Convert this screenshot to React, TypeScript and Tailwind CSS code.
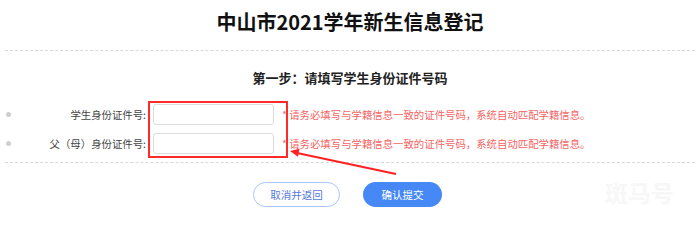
const fields = [
  { label: "学生身份证件号:" },
  { label: "父（母）身份证件号:" },
]

export default function App() {
  return (
    <div className="relative w-[700px] h-[221px] overflow-hidden bg-white font-['Noto_Sans_CJK_SC',sans-serif]">
      {/* Header */}
      <h1 className="pt-[8px] text-center text-[20px] leading-[28px] font-bold text-[#111]">
        中山市2021学年新生信息登记
      </h1>
      <div className="mx-[5px] mt-[14px] border-t border-dashed border-[#d9d9d9]" />

      <h2 className="mt-[17px] text-center text-[13px] leading-[20px] font-bold text-[#222]">
        第一步：请填写学生身份证件号码
      </h2>

      {/* Form rows */}
      <div className="mt-[16px] flex flex-col gap-[8px]">
        {fields.map((f) => (
          <div key={f.label} className="flex items-center h-[21px]">
            <span className="ml-[6px] w-[5px] h-[5px] rounded-full bg-[#cfcfcf] shrink-0" />
            <label className="w-[135px] text-right text-[10.4px] leading-[14px] text-[#444]">
              {f.label}
            </label>
            <input
              className="ml-[7px] w-[121px] h-[21px] rounded-[3px] border border-[#dcdcdc] bg-white outline-none"
              type="text"
            />
            <span className="ml-[8px] text-[10.4px] leading-[14px] text-[#f56464] whitespace-nowrap">
              * 请务必填写与学籍信息一致的证件号码，系统自动匹配学籍信息。
            </span>
          </div>
        ))}
      </div>

      <div className="mx-[5px] mt-[8px] border-t border-dashed border-[#d9d9d9]" />

      {/* Buttons */}
      <div className="mt-[19px] flex justify-center gap-[23px] pr-[5px]">
        <button className="w-[87px] h-[25px] rounded-full border border-[#a8c6ff] bg-white text-[10.5px] text-[#5879d8]">
          取消并返回
        </button>
        <button className="w-[79px] h-[25px] rounded-full bg-[#4688f6] text-[10.5px] text-white">
          确认提交
        </button>
      </div>

      {/* Annotation overlay */}
      <div className="absolute left-[148px] top-[101px] w-[140px] h-[57px] border-2 border-[#ff2b2b]" />
      <svg className="absolute left-0 top-0 pointer-events-none" width="700" height="221">
        <line x1="396" y1="174" x2="297" y2="153" stroke="#ff2222" strokeWidth="2" />
        <polygon points="290,151 299.5,148.8 298,156.8" fill="#ff2222" />
      </svg>

      {/* Watermark */}
      <span className="absolute left-[605px] top-[177px] text-[23px] leading-[30px] font-bold text-[#f7f7f7]">
        斑马号
      </span>
    </div>
  )
}
